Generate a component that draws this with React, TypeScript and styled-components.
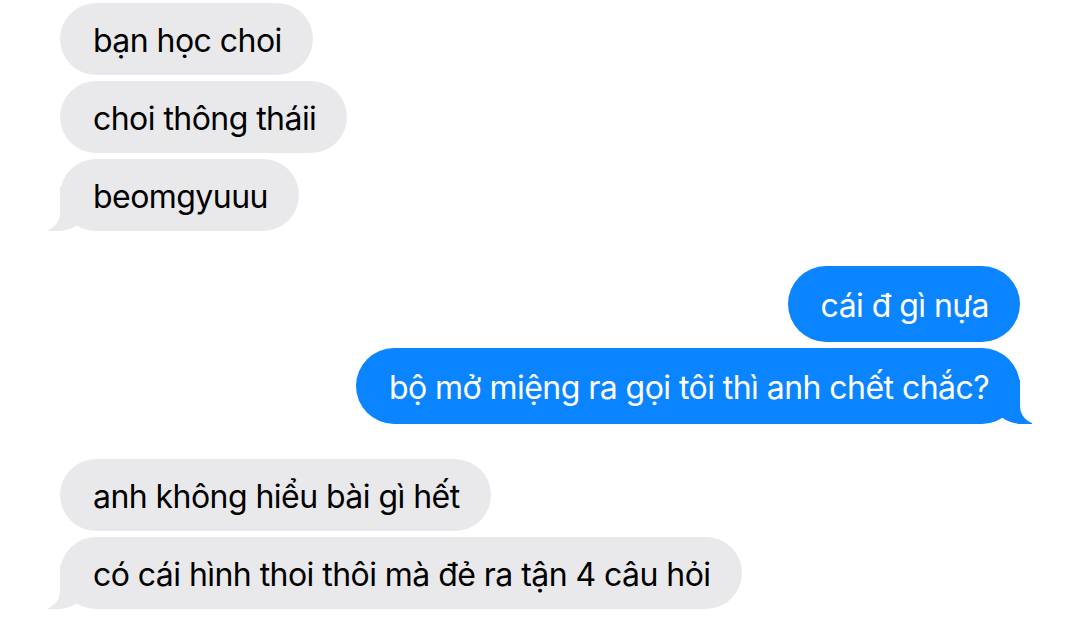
import React from "react";
import styled, { createGlobalStyle, css } from "styled-components";

const Global = createGlobalStyle`
  html, body { margin: 0; padding: 0; background: #ffffff; }
  body { font-family: Inter, "Noto Sans", "Liberation Sans", sans-serif; }
`;

const Thread = styled.div`
  width: 1080px;
  height: 629px;
  box-sizing: border-box;
  padding: 3px 60px 0 60px;
  display: flex;
  flex-direction: column;
  gap: 35px;
  overflow: hidden;
  background: #ffffff;
`;

const Group = styled.div<{ $me?: boolean }>`
  display: flex;
  flex-direction: column;
  align-items: ${(p) => (p.$me ? "flex-end" : "flex-start")};
  gap: 6px;
`;

const GRAY = "#e9e9eb";
const BLUE = "#0a84ff";

const Bubble = styled.div<{ $me?: boolean; $tail?: boolean }>`
  position: relative;
  box-sizing: border-box;
  height: ${(p) => (p.$me ? 76 : 72)}px;
  padding: 4px 31px 0 33px;
  display: flex;
  align-items: center;
  border-radius: 38px;
  font-size: 32px;
  letter-spacing: -0.55px;
  white-space: nowrap;
  background: ${(p) => (p.$me ? BLUE : GRAY)};
  color: ${(p) => (p.$me ? "#ffffff" : "#000000")};

  ${(p) =>
    p.$tail &&
    css`
      &::before,
      &::after {
        content: "";
        position: absolute;
        bottom: 0;
        height: 44px;
      }
      &::before {
        ${p.$me ? "right: -12px;" : "left: -12px;"}
        width: 40px;
        background: ${p.$me ? BLUE : GRAY};
        ${p.$me
          ? "border-bottom-left-radius: 30px 26px;"
          : "border-bottom-right-radius: 30px 26px;"}
      }
      &::after {
        ${p.$me ? "right: -48px;" : "left: -48px;"}
        width: 48px;
        background: #ffffff;
        ${p.$me
          ? "border-bottom-left-radius: 18px;"
          : "border-bottom-right-radius: 18px;"}
      }
    `}
`;

const Text = styled.span`
  position: relative;
  z-index: 1;
  line-height: 38px;
`;

type Msg = { text: string };
const groups: { me: boolean; msgs: Msg[] }[] = [
  {
    me: false,
    msgs: [{ text: "bạn học choi" }, { text: "choi thông tháii" }, { text: "beomgyuuu" }],
  },
  {
    me: true,
    msgs: [{ text: "cái đ gì nựa" }, { text: "bộ mở miệng ra gọi tôi thì anh chết chắc?" }],
  },
  {
    me: false,
    msgs: [
      { text: "anh không hiểu bài gì hết" },
      { text: "có cái hình thoi thôi mà đẻ ra tận 4 câu hỏi" },
    ],
  },
];

export default function App() {
  return (
    <>
      <Global />
      <Thread>
        {groups.map((g, gi) => (
          <Group key={gi} $me={g.me}>
            {g.msgs.map((m, mi) => (
              <Bubble key={mi} $me={g.me} $tail={mi === g.msgs.length - 1}>
                <Text>{m.text}</Text>
              </Bubble>
            ))}
          </Group>
        ))}
      </Thread>
    </>
  );
}
